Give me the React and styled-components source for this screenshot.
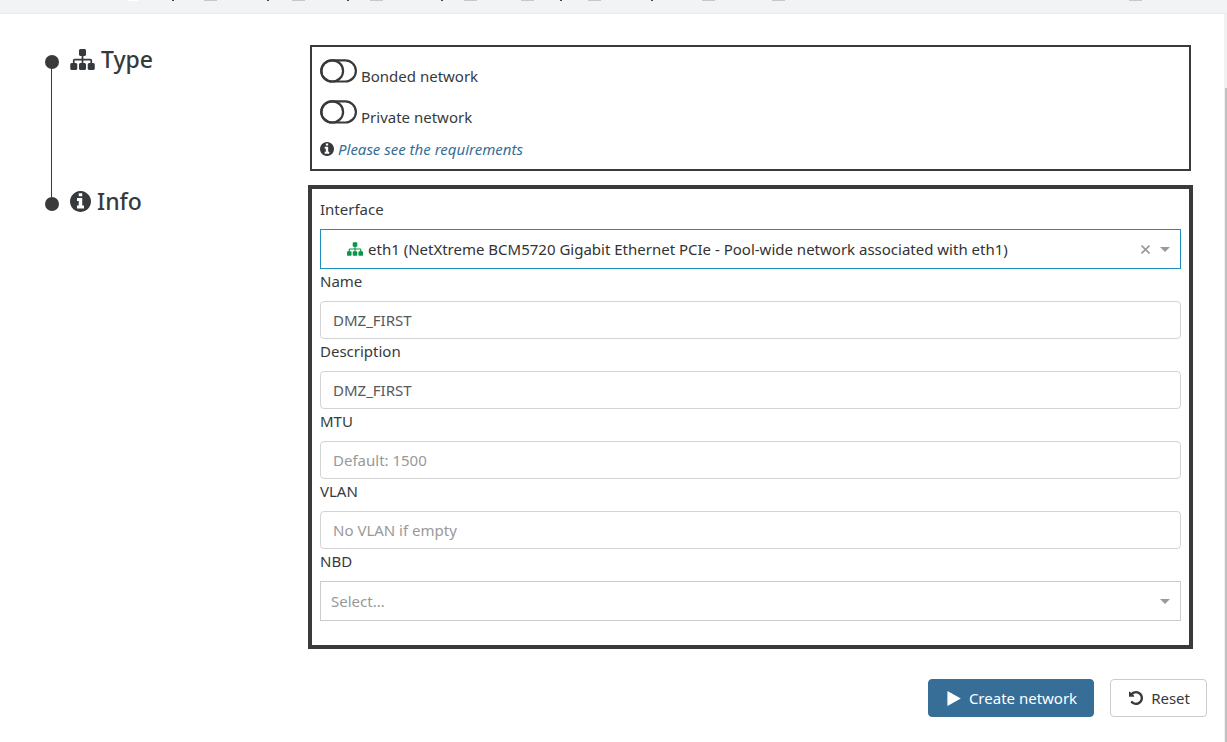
import React, { useState } from 'react'
import styled, { createGlobalStyle, css } from 'styled-components'

const paths = {
  sitemap: 'M1792 1248v320q0 40-28 68t-68 28h-320q-40 0-68-28t-28-68v-320q0-40 28-68t68-28h96v-192h-512v192h96q40 0 68 28t28 68v320q0 40-28 68t-68 28h-320q-40 0-68-28t-28-68v-320q0-40 28-68t68-28h96v-192h-512v192h96q40 0 68 28t28 68v320q0 40-28 68t-68 28h-320q-40 0-68-28t-28-68v-320q0-40 28-68t68-28h96v-192q0-52 38-90t90-38h512v-192h-96q-40 0-68-28t-28-68v-320q0-40 28-68t68-28h320q40 0 68 28t28 68v320q0 40-28 68t-68 28h-96v192h512q52 0 90 38t38 90v192h96q40 0 68 28t28 68z',
  info: 'M1152 1376v-160q0-14-9-23t-23-9h-96v-512q0-14-9-23t-23-9h-320q-14 0-23 9t-9 23v160q0 14 9 23t23 9h96v320h-96q-14 0-23 9t-9 23v160q0 14 9 23t23 9h448q14 0 23-9t9-23zm-128-896v-160q0-14-9-23t-23-9h-192q-14 0-23 9t-9 23v160q0 14 9 23t23 9h192q14 0 23-9t9-23zm640 416q0 209-103 385.5t-279.5 279.5-385.5 103-385.5-103-279.5-279.5-103-385.5 103-385.5 279.5-279.5 385.5-103 385.5 103 279.5 279.5 103 385.5z',
  play: 'M1576 927l-1328 738q-23 13-39.5 3t-16.5-36v-1472q0-26 16.500-36t39.500 3l1328 738q23 13 23 31t-23 31z',
  undo: 'M1664 896q0 156-61 298t-164 245-245 164-298 61q-172 0-327-72.5t-264-204.5q-7-10-6.500-22.500t8.500-20.500l137-138q10-9 25-9 16 2 23 12 73 95 179 147t225 52q104 0 198.500-40.500t163.500-109.500 109.500-163.500 40.500-198.500-40.500-198.500-109.500-163.500-163.500-109.500-198.500-40.500q-98 0-188 35.500t-160 101.500l137 138q31 30 14 69-17 40-59 40h-448q-26 0-45-19t-19-45v-448q0-42 40-59 39-17 69 14l130 129q107-101 244.500-156.500t284.500-55.500q156 0 298 61t245 164 164 245 61 298z',
}

const boxes = {
  sitemap: '0 128 1792 1536',
  info: '128 128 1536 1536',
  play: '192 96 1408 1600',
  undo: '128 128 1536 1536',
}

function Icon({ name, width, height }) {
  return (
    <svg width={width} height={height} viewBox={boxes[name]} fill='currentColor' aria-hidden='true'>
      <path d={paths[name]} />
    </svg>
  )
}

function Toggle({ id, label }) {
  const [on, setOn] = useState(false)

  return (
    <ToggleRow htmlFor={id}>
      <input id={id} type='checkbox' checked={on} onChange={e => setOn(e.target.checked)} />
      <svg width='37' height='24' viewBox='0 0 37 24' fill='none' stroke='currentColor' strokeWidth='2.2' aria-hidden='true'>
        <rect x='1.3' y='1.3' width='34.6' height='21.2' rx='10.6' />
        <ellipse cx={on ? 24.8 : 12.2} cy='11.9' rx='10.9' ry='10.6' />
      </svg>
      <span>{label}</span>
    </ToggleRow>
  )
}

function TextField({ id, label, value, placeholder, onChange }) {
  return (
    <>
      <Label htmlFor={id}>{label}</Label>
      <Input
        id={id}
        name={id}
        type='text'
        value={value}
        placeholder={placeholder}
        onChange={onChange}
      />
    </>
  )
}

function Caret() {
  return (
    <svg width='10' height='5' viewBox='0 0 10 5' fill='#999' aria-hidden='true'>
      <path d='M0 0h10l-5 5z' />
    </svg>
  )
}

// lower edge of the scrolled navigation bar
const navMarks = [204, 292, 370, 464, 521, 588, 702, 772, 1129]
const navTails = [172, 267, 347, 441, 560, 651]

function App() {
  const [pif, setPif] = useState('eth1')
  const [nbd, setNbd] = useState('')
  const [inputState, setInputState] = useState({
    name: 'DMZ_FIRST',
    description: 'DMZ_FIRST',
    mtu: '',
    vlan: '',
  })

  const { name, description, mtu, vlan } = inputState

  const handleInput = key => e => {
    setInputState({...inputState, [key]: e.target.value})
  }

  const handleReset = () => {
    setPif('')
    setNbd('')
    setInputState({ name: '', description: '', mtu: '', vlan: '' })
  }

  return (
    <>
      <GlobalStyle />
      <TopBar>
        <svg width='1227' height='1' aria-hidden='true'>
          <rect x='128' width='10' height='1' fill='#fff' />
          {navMarks.map(x => <rect key={x} x={x} width='13' height='1' fill='#c8c8c8' />)}
          {navTails.map(x => <rect key={x} x={x} width='2' height='1' fill='#444' />)}
        </svg>
      </TopBar>
      <Page>
        <Content onSubmit={e => e.preventDefault()}>
          <Section>
            <Rail><Dot /><Line /></Rail>
            <Title><Icon name='sitemap' width='25' height='21' />Type</Title>
            <Panel>
              <Toggle id='bonded' label='Bonded network' />
              <Toggle id='private' label='Private network' />
              <Requirements>
                <Icon name='info' width='14' height='14' />
                <a href='#requirements'>Please see the requirements</a>
              </Requirements>
            </Panel>
          </Section>
          <Section>
            <Rail><Dot /></Rail>
            <Title><Icon name='info' width='21' height='21' />Info</Title>
            <Panel $active>
              <Label htmlFor='interface'>Interface</Label>
              <SelectBox>
                <Select id='interface' $focused $icon value={pif} onChange={e => setPif(e.target.value)}>
                  <option value=''>Select...</option>
                  <option value='eth1'>eth1 (NetXtreme BCM5720 Gigabit Ethernet PCIe - Pool-wide network associated with eth1)</option>
                </Select>
                <PifIcon><Icon name='sitemap' width='16' height='14' /></PifIcon>
                <Indicators>
                  <Clear type='button' aria-label='Clear' onClick={() => setPif('')}>
                    <svg width='9' height='9' viewBox='0 0 9 9' stroke='#999' strokeWidth='1.6' aria-hidden='true'>
                      <path d='M.5.5l8 8M8.500.5l-8 8' />
                    </svg>
                  </Clear>
                  <Caret />
                </Indicators>
              </SelectBox>
              <TextField id='name' label='Name' value={name} onChange={handleInput('name')} />
              <TextField id='description' label='Description' value={description} onChange={handleInput('description')} />
              <TextField id='mtu' label='MTU' value={mtu} placeholder='Default: 1500' onChange={handleInput('mtu')} />
              <TextField id='vlan' label='VLAN' value={vlan} placeholder='No VLAN if empty' onChange={handleInput('vlan')} />
              <Label htmlFor='nbd'>NBD</Label>
              <SelectBox>
                <Select id='nbd' $empty={!nbd} value={nbd} onChange={e => setNbd(e.target.value)}>
                  <option value=''>Select...</option>
                  <option value='none'>No NBD Connection</option>
                  <option value='nbd'>NBD Connection</option>
                </Select>
                <Indicators><Caret /></Indicators>
              </SelectBox>
            </Panel>
          </Section>
          <Actions>
            <Button type='submit' $primary>
              <Icon name='play' width='14' height='15' />
              Create network
            </Button>
            <Button type='button' onClick={handleReset}>
              <Icon name='undo' width='14' height='14' />
              Reset
            </Button>
          </Actions>
        </Content>
        <ScrollTrack><ScrollThumb /></ScrollTrack>
      </Page>
    </>
  )
}

const GlobalStyle = createGlobalStyle`
  *, *::before, *::after{
    box-sizing: border-box;
  }
  body{
    margin: 0;
    background: #fff;
    color: #373a3c;
    font-family: "Noto Sans", "Open Sans", sans-serif;
    font-size: 15px;
    line-height: 24px;
  }
  #root{
    display: flex;
    flex-direction: column;
    min-height: 100vh;
  }
  svg{
    flex: none;
    display: block;
  }
`;

const TopBar = styled.header`
  height: 14px;
  overflow: hidden;
  background: #f2f3f5;
  border-bottom: 1px solid #eaebed;
`;

const Page = styled.div`
  flex: 1;
  display: flex;
`;

const Content = styled.form`
  flex: 1;
  min-width: 0;
  padding: 31px 17px 24px 45px;
`;

const Section = styled.section`
  display: grid;
  grid-template-columns: 14px 251px minmax(0, 1fr);
  padding: 0 16px 16px 0;
`;

const Rail = styled.div`
  display: flex;
  flex-direction: column;
  padding-top: 10px;
  margin-bottom: -26px;
`;

const Dot = styled.span`
  width: 14px;
  height: 14px;
  border-radius: 50%;
  background: #3a3a3a;
`;

const Line = styled.span`
  flex: 1;
  width: 1px;
  margin-left: 6px;
  background: #3a3a3a;
`;

const Title = styled.h2`
  display: flex;
  align-items: center;
  align-self: start;
  gap: 6px;
  margin: 0;
  padding-left: 11px;
  font-size: 23px;
  font-weight: 500;
  line-height: 28px;
`;

const Panel = styled.div`
  padding: 8px;
  border: 2px solid #3a3a3a;
  ${({ $active }) => $active && css`
    padding-bottom: 24px;
    box-shadow: 0 0 0 2px #3a3a3a;
  `}
`;

const ToggleRow = styled.label`
  position: relative;
  display: flex;
  gap: 4px;
  padding: 4px 0 8px;
  input{
    position: absolute;
    width: 37px;
    height: 24px;
    margin: 0;
    opacity: 0;
  }
  span{
    padding-top: 5px;
  }
`;

const Requirements = styled.div`
  display: flex;
  align-items: center;
  gap: 4px;
  a{
    color: #366e98;
    font-style: italic;
    text-decoration: none;
  }
`;

const Label = styled.label`
  display: block;
  margin-bottom: 8px;
`;

const Input = styled.input`
  display: block;
  width: 100%;
  height: 38px;
  padding: 0 12px;
  font: inherit;
  color: #55595c;
  background: #fff;
  border: 1px solid #d3d3d3;
  border-radius: 4px;
  outline: none;
  &::placeholder{
    color: #999;
    opacity: 1;
  }
`;

const SelectBox = styled.div`
  position: relative;
`;

const Select = styled.select`
  appearance: none;
  display: block;
  width: 100%;
  height: 40px;
  padding: 0 52px 0 ${({ $icon }) => $icon ? '47px' : '10px'};
  font: inherit;
  color: ${({ $empty }) => $empty ? '#999' : '#333'};
  background: #fff;
  border: 1px solid ${({ $focused }) => $focused ? '#1e8fbe' : '#ccc'};
  border-radius: 0;
  outline: none;
`;

const PifIcon = styled.span`
  position: absolute;
  top: 13px;
  left: 27px;
  color: #0a9648;
  pointer-events: none;
`;

const Indicators = styled.span`
  position: absolute;
  top: 0;
  right: 11px;
  height: 100%;
  display: flex;
  align-items: center;
  gap: 10px;
  pointer-events: none;
`;

const Clear = styled.button`
  padding: 0;
  border: none;
  background: none;
  cursor: pointer;
  pointer-events: auto;
`;

const Actions = styled.div`
  display: flex;
  justify-content: flex-end;
  gap: 16px;
  padding-top: 16px;
`;

const Button = styled.button`
  display: flex;
  align-items: center;
  justify-content: center;
  gap: 8px;
  height: 38px;
  padding: 0 16px 0 18px;
  font: inherit;
  color: ${({ $primary }) => $primary ? '#fff' : '#373a3c'};
  background: ${({ $primary }) => $primary ? '#366e98' : '#fff'};
  border: 1px solid ${({ $primary }) => $primary ? '#366e98' : '#ccc'};
  border-radius: 4px;
  cursor: pointer;
`;

const ScrollTrack = styled.div`
  width: 3px;
  padding: 74px 0 0 1px;
  display: flex;
  background: #f1f1f1;
`;

const ScrollThumb = styled.div`
  flex: 1;
  background: #c1c1c1;
`;

export default App
